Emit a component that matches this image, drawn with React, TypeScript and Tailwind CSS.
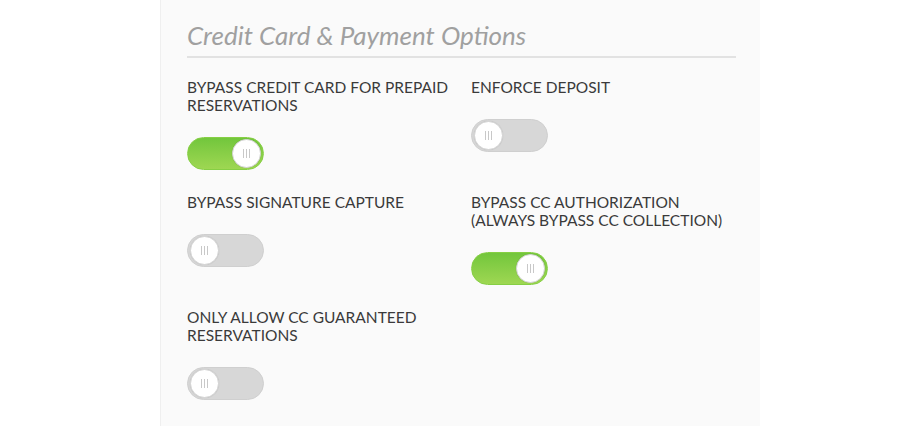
import React from "react";

type Option = {
  label: string[];
  on: boolean;
};

const options: Option[] = [
  { label: ["BYPASS CREDIT CARD FOR PREPAID", "RESERVATIONS"], on: true },
  { label: ["ENFORCE DEPOSIT"], on: false },
  { label: ["BYPASS SIGNATURE CAPTURE"], on: false },
  { label: ["BYPASS CC AUTHORIZATION", "(ALWAYS BYPASS CC COLLECTION)"], on: true },
  { label: ["ONLY ALLOW CC GUARANTEED", "RESERVATIONS"], on: false },
];

function Toggle({ on, onClick }: { on: boolean; onClick: () => void }) {
  return (
    <button
      onClick={onClick}
      className={
        "flex h-[33px] w-[77px] items-center rounded-full border px-[2px] " +
        (on
          ? "justify-end border-[#86cf44] bg-gradient-to-b from-[#72c63c] to-[#9ed752]"
          : "justify-start border-[#cfcfcf] bg-[#d7d7d7]")
      }
    >
      <span className="flex h-[29px] w-[29px] items-center justify-center gap-[2px] rounded-full border border-[#d5d5d5] bg-white shadow-[0_0_1px_rgba(0,0,0,0.15)]">
        <span className="h-[9px] w-px bg-[#c8c8c8]" />
        <span className="h-[9px] w-px bg-[#c8c8c8]" />
        <span className="h-[9px] w-px bg-[#c8c8c8]" />
      </span>
    </button>
  );
}

export default function App() {
  const [state, setState] = React.useState(options.map((o) => o.on));

  return (
    <div className="flex h-[426px] w-full justify-center bg-white font-['Lato',sans-serif]">
      <div className="w-[600px] border-l border-[#efefef] bg-[#fafafa] pl-[26px] pr-[24px] pt-[18px]">
        <h2 className="border-b-2 border-[#e2e2e2] pb-[4px] text-[26px] font-normal italic leading-[34px] text-[#a0a0a0]">
          Credit Card &amp; Payment Options
        </h2>
        <div className="mt-[20px] grid grid-cols-[284px_1fr] gap-y-[23px]">
          {options.map((o, i) => (
            <div key={i} className="flex flex-col items-start">
              <div className="whitespace-nowrap text-[15.5px] leading-[18px] text-[#3a3a3a]">
                {o.label.map((l, j) => (
                  <div key={j}>{l}</div>
                ))}
              </div>
              <div className="mt-[23px]">
                <Toggle
                  on={state[i]}
                  onClick={() =>
                    setState((s) => s.map((v, k) => (k === i ? !v : v)))
                  }
                />
              </div>
            </div>
          ))}
        </div>
      </div>
    </div>
  );
}
